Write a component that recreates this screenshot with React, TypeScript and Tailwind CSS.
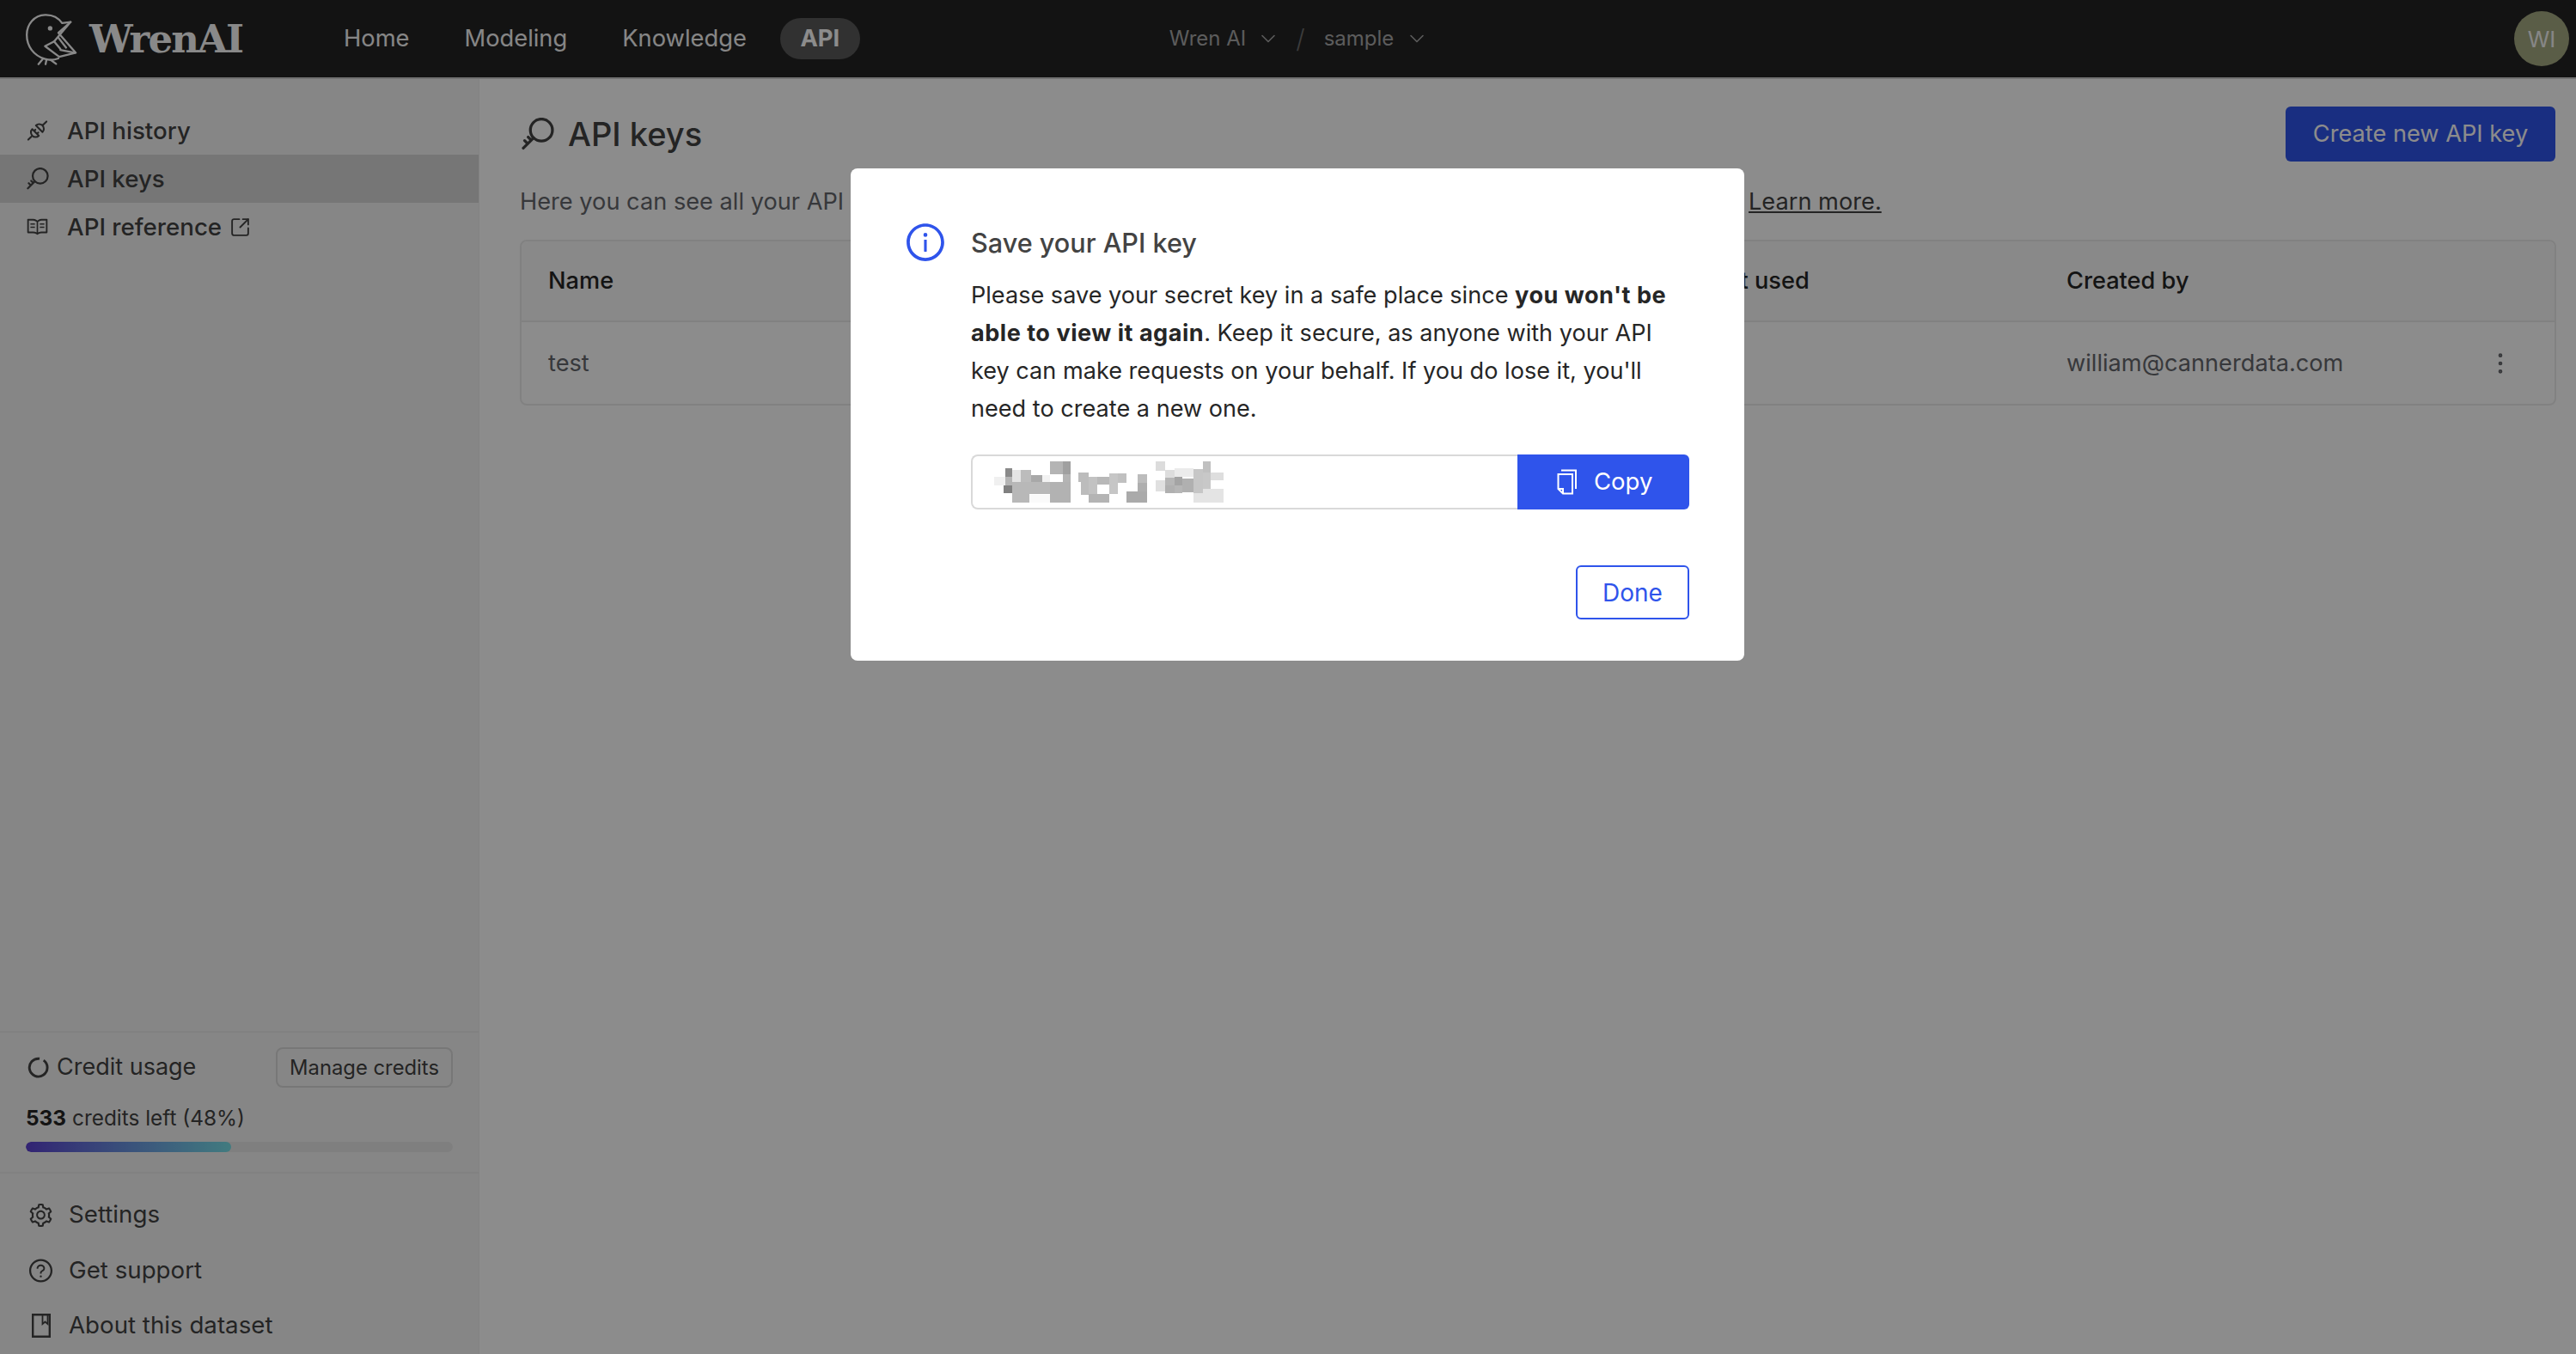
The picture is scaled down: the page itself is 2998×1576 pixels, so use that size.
import React from "react";
import { AiOutlineRead, AiOutlineSetting, AiOutlineQuestionCircle, AiOutlineInfoCircle } from "react-icons/ai";
import { ChevronDown, SquareArrowOutUpRight, MoreVertical } from "lucide-react";

const font = { fontFamily: "Inter, 'Noto Sans', sans-serif" };

function KeyIcon({ className }: { className?: string }) {
  return (
    <svg viewBox="0 0 37 37" fill="none" stroke="currentColor" className={className}>
      <circle cx="22.5" cy="14" r="12.5" strokeWidth="3.2" />
      <path d="M13.5 23 L2 34.5 M7 29.5 l-3.5-3.5 M11 25.5 l-3.5-3.5" strokeWidth="3.2" strokeLinecap="round" />
    </svg>
  );
}

function PlugIcon() {
  return (
    <svg viewBox="27 21 90 90" className="w-[30px] h-[30px]" fill="none" stroke="currentColor" strokeWidth="7" strokeLinecap="round" strokeLinejoin="round">
      <g transform="rotate(-45 72 66)">
        <path d="M22 66 H38 M62 48 A18 18 0 0 0 62 84 Z M62 58 H69 M62 74 H69 M82 48 A18 18 0 0 1 82 84 Z M100 66 H122" />
      </g>
    </svg>
  );
}

function Bird() {
  return (
    <svg viewBox="85 35 195 190" className="w-[65px] h-[63px] shrink-0" fill="none" stroke="#fafafa" strokeWidth="7" strokeLinejoin="round" strokeLinecap="round">
      <path d="M248 70 L218 74 C205 55 182 44 158 45 C120 46 94 78 94 115 C94 155 118 188 158 200 C175 205 190 204 205 198" />
      <path d="M248 70 L205 108 L266 178 L208 192 L158 155 L190 138 Z" />
      <path d="M190 138 L212 165 M205 125 L232 160 M212 168 L262 178" />
      <path d="M150 200 L135 218 M163 203 L160 218 M178 203 L197 217" />
      <circle cx="176" cy="92" r="8" fill="#fafafa" stroke="none" />
    </svg>
  );
}

function CopyIcon() {
  return (
    <svg viewBox="0 0 24 30" className="w-[24px] h-[30px] shrink-0" fill="none" stroke="#fff" strokeWidth="2">
      <path d="M5 1.5 H22 V23" />
      <path d="M1.5 6 H18 V28.5 H7 L1.5 23 Z" />
      <path d="M1.5 23 H7 V28.5" />
    </svg>
  );
}

function DatasetIcon() {
  return (
    <svg viewBox="0 0 22 28" className="w-[22px] h-[28px]" fill="none" stroke="currentColor" strokeWidth="2.4">
      <path d="M1.2 1.2 H20.8 V26.8 H1.2 Z" />
      <path d="M12.5 1.2 V12 L15.5 9.5 L18.5 12 V1.2" strokeWidth="1.8" />
    </svg>
  );
}

function Mosaic() {
  const r: [number, number, number, number, string][] = [
    [276,48,45,45,"#b4b4b4"],[321,48,27,45,"#a0a0a0"],[120,72,24,30,"#8a8a8a"],[81,102,39,30,"#f0f0f0"],[120,102,24,30,"#b4b4b4"],
    [144,78,30,42,"#e4e4e4"],[174,78,36,42,"#bcbcbc"],[210,96,39,24,"#a8a8a8"],[249,96,27,24,"#f2f2f2"],[321,93,27,27,"#b4b4b4"],
    [144,120,132,42,"#b8b8b8"],[114,132,30,27,"#808080"],[276,120,72,72,"#b2b2b2"],[144,162,60,30,"#b8b8b8"],[204,165,72,27,"#fafafa"],
    [375,87,36,33,"#bcbcbc"],[384,120,27,45,"#bcbcbc"],[411,102,30,60,"#c2c2c2"],[441,102,42,27,"#b8b8b8"],[483,90,30,72,"#c6c6c6"],
    [513,90,30,33,"#c0c0c0"],[411,162,72,30,"#b4b4b4"],[582,93,33,30,"#bcbcbc"],[582,123,33,30,"#aeaeae"],[543,153,72,39,"#aaaaaa"],
    [645,48,33,33,"#dcdcdc"],[678,78,33,27,"#dddddd"],[711,72,66,30,"#ebebeb"],[810,48,27,39,"#c0c0c0"],[777,75,33,84,"#c6c6c6"],
    [810,87,27,57,"#c8c8c8"],[837,87,45,27,"#dedede"],[645,114,33,39,"#e0e0e0"],[678,105,33,27,"#b6b6b6"],[711,102,27,30,"#a4a4a4"],
    [738,108,39,48,"#b0b0b0"],[678,132,33,27,"#b0b0b0"],[711,132,27,27,"#b6b6b6"],[810,144,72,48,"#e4e4e4"],[777,159,33,33,"#e4e4e4"],
  ];
  return (
    <svg viewBox="0 0 900 240" className="w-[300px] h-[80px] shrink-0 -my-[9px] -ml-[2px]" shapeRendering="crispEdges">
      {r.map(([x, y, w, h, c], i) => (
        <rect key={i} x={x} y={y} width={w} height={h} fill={c} />
      ))}
    </svg>
  );
}

function SideRow({ icon, label, active, extra }: { icon: React.ReactNode; label: string; active?: boolean; extra?: React.ReactNode }) {
  return (
    <div className={`h-[56px] flex items-center pl-[30px] gap-[21px] ${active ? "bg-[#d7d7d7]" : ""}`}>
      <span className="w-[27px] flex justify-center shrink-0">{icon}</span>
      <span className="text-[27.7px] font-medium flex items-center gap-[9px] pt-[1px]">{label}{extra}</span>
    </div>
  );
}

function BottomRow({ icon, label }: { icon: React.ReactNode; label: string }) {
  return (
    <div className="h-[64.5px] flex items-center pl-[32px] gap-[17px]">
      <span className="w-[31px] flex justify-center shrink-0">{icon}</span>
      <span className="text-[27.7px]">{label}</span>
    </div>
  );
}

export default function App() {
  return (
    <div style={font} className="h-screen w-full flex flex-col overflow-hidden bg-white text-[#434343]">
      <header className="h-[92px] shrink-0 bg-[#242424] border-b-2 border-[#d0d0d0] flex items-center pl-[28px] pr-[8px] text-[#f5f5f5]">
        <Bird />
        <span className="ml-[11px] w-[176px] text-[45px] font-bold tracking-[-1.9px] text-[#fafafa] leading-none" style={{ fontFamily: "'DejaVu Serif', serif" }}>WrenAI</span>
        <nav className="ml-[120px] flex items-center text-[27.3px] gap-[64px]">
          <span>Home</span>
          <span>Modeling</span>
          <span>Knowledge</span>
          <span className="w-[93px] h-[48px] rounded-full bg-[#5a5a5a] font-bold flex items-center justify-center text-white -ml-[25px]">API</span>
        </nav>
        <div className="ml-[360px] flex items-center text-[24px] text-[#a8a8a8]">
          <span>Wren AI</span>
          <ChevronDown className="ml-[12px] w-[28px] h-[28px]" strokeWidth={1.4} />
          <span className="ml-[18px] text-[#6e6e6e] text-[30px] font-light">/</span>
          <span className="ml-[22px]">sample</span>
          <ChevronDown className="ml-[13px] w-[28px] h-[28px]" strokeWidth={1.4} />
        </div>
        <div className="ml-auto w-[64px] h-[64px] rounded-full bg-[#a5a982] text-[#f5f5f5] text-[26px] flex items-center justify-center">WI</div>
      </header>

      <div className="flex-1 flex min-h-0">
        <aside className="w-[558px] shrink-0 bg-[#f5f5f5] border-r border-[#efefef] flex flex-col">
          <div className="pt-[32px]">
            <SideRow icon={<PlugIcon />} label="API history" />
            <SideRow active icon={<KeyIcon className="w-[26px] h-[26px]" />} label="API keys" />
            <SideRow
              icon={<AiOutlineRead className="w-[32px] h-[32px]" />}
              label="API reference"
              extra={<SquareArrowOutUpRight className="w-[25px] h-[25px]" strokeWidth={1.8} />}
            />
          </div>
          <div className="mt-auto border-t-2 border-[#ececec] h-[164px] px-[30px] pt-[17px]">
            <div className="flex items-center justify-between h-[47px]">
              <div className="flex items-center gap-[9px] pl-[2px]">
                <svg viewBox="0 0 24 24" className="w-[25px] h-[25px]" fill="none" stroke="currentColor" strokeWidth="2.8">
                  <path d="M18 4 A10 10 0 1 1 13.5 2.2" />
                </svg>
                <span className="text-[27px]">Credit usage</span>
              </div>
              <button className="w-[206px] h-[47px] rounded-[8px] border-2 border-[#d9d9d9] text-[23.8px] flex items-center justify-center">Manage credits</button>
            </div>
            <div className="mt-[20px] text-[24.4px] leading-[30px]"><b className="font-bold text-[#262626]">533</b> credits left (48%)</div>
            <div className="mt-[13px] h-[12px] rounded-full bg-[#e8e8e8] overflow-hidden">
              <div className="h-full w-[48%] rounded-full bg-gradient-to-r from-[#5c3fd1] to-[#78e0e8]" />
            </div>
          </div>
          <div className="border-t-2 border-[#ececec] pt-[16px] h-[212px]">
            <BottomRow icon={<AiOutlineSetting className="w-[35px] h-[35px]" />} label="Settings" />
            <BottomRow icon={<AiOutlineQuestionCircle className="w-[32px] h-[32px]" />} label="Get support" />
            <BottomRow icon={<DatasetIcon />} label="About this dataset" />
          </div>
        </aside>

        <main className="flex-1 min-w-0 pl-[47px] pr-[23px] pt-[32px]">
          <div className="flex items-center justify-between h-[64px]">
            <div className="flex items-center gap-[16px] ml-[2px] text-[38px] font-medium text-[#434343]">
              <KeyIcon className="w-[38px] h-[38px]" />
              <span>API keys</span>
            </div>
            <button className="w-[314px] h-[64px] mr-[1px] rounded-[6px] bg-[#2f54eb] text-white text-[27.2px] flex items-center justify-center">Create new API key</button>
          </div>
          <div className="mt-[27px] h-[40px] flex items-center text-[27.2px] text-[#65676c]">
            <span className="w-[1430px] shrink-0 whitespace-nowrap overflow-hidden">Here you can see all your API keys. Do not share your key with others.</span>
            <a className="underline text-[#434343]">Learn more.</a>
          </div>
          <div className="mt-[24px] w-full border-2 border-[#ececec] rounded-[8px] bg-[#fff]">
            <div className="h-[94px] flex items-center bg-[#fafafa] border-b-2 border-[#ececec] pl-[31px] text-[27.2px] font-medium text-[#262626] rounded-t-[8px]">
              <span className="w-[1342px] shrink-0">Name</span>
              <span className="w-[425px] shrink-0">Last used</span>
              <span>Created by</span>
            </div>
            <div className="h-[95px] flex items-center pl-[31px] pt-[1px] text-[27.2px] text-[#65676c]">
              <span className="w-[1767px] shrink-0">test</span>
              <span>william@cannerdata.com</span>
              <MoreVertical className="ml-auto mr-[47px] w-[32px] h-[32px]" strokeWidth={1.5} />
            </div>
          </div>
        </main>
      </div>

      <div className="fixed inset-0 bg-black/45">
        <div className="absolute left-[990px] top-[196px] w-[1040px] h-[573px] bg-white rounded-[8px] pl-[65px] pr-[64px] pt-[61px]">
          <div className="flex items-start">
            <AiOutlineInfoCircle className="w-[50px] h-[50px] text-[#2f54eb] shrink-0 -ml-[3px]" />
            <div className="ml-[28px] pt-[3px] flex-1 min-w-0">
              <div className="text-[30.6px] font-medium leading-[46px] text-[#434343]">Save your API key</div>
              <p className="mt-[16px] text-[27.1px] leading-[44px] text-[#262626]">
                Please save your secret key in a safe place since <b className="font-bold tracking-[0.5px]">you won't be able to view it again</b>. Keep it secure, as anyone with your API key can make requests on your behalf. If you do lose it, you'll need to create a new one.
              </p>
              <div className="mt-[31px] h-[64px] flex">
                <div className="flex-1 min-w-0 border-2 border-r-0 border-[#d9d9d9] rounded-l-[8px] flex items-center overflow-hidden">
                  <Mosaic />
                </div>
                <button className="w-[200px] pl-[46px] bg-[#2f54eb] text-white text-[27.5px] rounded-r-[6px] flex items-center justify-start gap-[19px]">
                  <CopyIcon />
                  <span>Copy</span>
                </button>
              </div>
            </div>
          </div>
          <div className="mt-[65px] flex justify-end">
            <button className="w-[132px] h-[63px] rounded-[6px] border-2 border-[#2f54eb] text-[#2f54eb] text-[28px]">Done</button>
          </div>
        </div>
      </div>
    </div>
  );
}
